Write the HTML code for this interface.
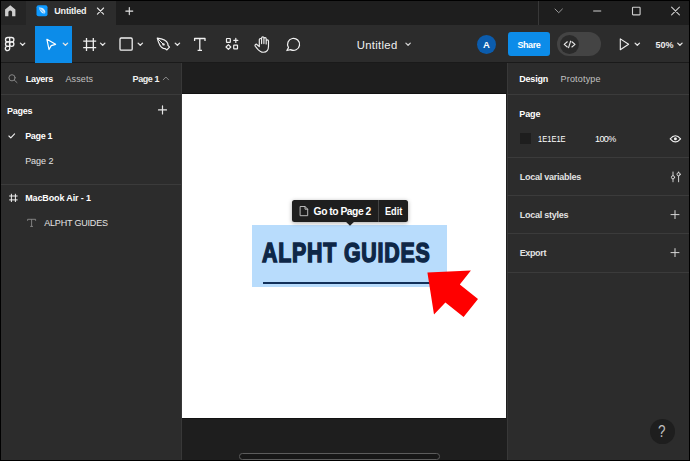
<!DOCTYPE html>
<html><head><meta charset="utf-8">
<style>
*{box-sizing:border-box;margin:0;padding:0}
html,body{width:690px;height:461px;overflow:hidden;background:#000;font-family:"Liberation Sans",sans-serif;color:#fff}
.a{position:absolute}
.t{position:absolute;white-space:nowrap;font-size:9px;line-height:13px;color:#fff}
.b{font-weight:bold}
.hr{position:absolute;height:1px;background:#3b3b3b}
svg{position:absolute;left:0;top:0;overflow:visible}
</style></head><body>
<!-- backgrounds -->
<div class="a" style="left:1px;top:1px;width:687.7px;height:24px;background:#1e1e1e"></div>
<div class="a" style="left:1px;top:1px;width:25px;height:24px;background:#252525"></div>
<div class="a" style="left:26px;top:1px;width:90px;height:24px;background:#2c2c2c"></div>
<div class="a" style="left:538px;top:1px;width:1px;height:24px;background:#383838"></div>
<div class="a" style="left:1px;top:25px;width:687.7px;height:38px;background:#2c2c2c"></div>
<div class="a" style="left:1px;top:62px;width:687.7px;height:1px;background:#1a1a1a"></div>
<div class="a" style="left:35px;top:25.6px;width:37.3px;height:37px;background:#0c8ce9"></div>
<!-- canvas -->
<div class="a" style="left:182px;top:63px;width:325px;height:396.6px;background:#1e1e1e"></div>
<div class="a" style="left:182px;top:92.8px;width:324.2px;height:326.5px;background:#121212"></div>
<div class="a" style="left:182px;top:93.8px;width:324.2px;height:324.5px;background:#fff"></div>
<!-- left panel -->
<div class="a" style="left:1px;top:63px;width:181px;height:396.6px;background:#2c2c2c;border-right:1px solid #383838"></div>
<div class="hr" style="left:1px;top:94px;width:180px"></div>
<div class="hr" style="left:1px;top:183.5px;width:180px"></div>
<!-- right panel -->
<div class="a" style="left:506.6px;top:63px;width:182.1px;height:396.6px;background:#2c2c2c;border-left:1px solid #383838"></div>
<div class="hr" style="left:507px;top:94px;width:181.7px"></div>
<div class="hr" style="left:507px;top:157.2px;width:181.7px"></div>
<div class="hr" style="left:507px;top:195.2px;width:181.7px"></div>
<div class="hr" style="left:507px;top:233.2px;width:181.7px"></div>
<div class="hr" style="left:507px;top:271.6px;width:181.7px"></div>
<div class="a" style="left:520px;top:133px;width:11px;height:11px;background:#1e1e1e"></div>

<!-- toolbar widgets -->
<div class="a" style="left:477.4px;top:35.1px;width:19px;height:19px;border-radius:50%;background:#0b5cad"></div>
<div class="a" style="left:507.7px;top:32px;width:42.4px;height:24.4px;border-radius:3px;background:#0c8ce9"></div>
<div class="a" style="left:557px;top:32px;width:43.6px;height:24.4px;border-radius:12.2px;background:#444"></div>
<div class="a" style="left:559.8px;top:34.9px;width:19px;height:19px;border-radius:50%;background:#2a2a2a"></div>

<!-- canvas content -->
<div class="a" style="left:252.3px;top:225.4px;width:195.2px;height:61.5px;background:#b8dcfc"></div>
<div class="a" style="left:262.6px;top:282px;width:168px;height:2px;background:#12305a"></div>
<div class="t b" id="big" style="left:262.4px;top:233.4px;font-size:26.8px;line-height:40px;color:#0e2747;transform-origin:0 50%;transform:scaleX(0.797);-webkit-text-stroke:1.5px #0e2747;letter-spacing:1px">ALPHT GUIDES</div>
<!-- tooltip -->
<div class="a" style="left:291.6px;top:200.2px;width:116.8px;height:21.4px;border-radius:2.5px;background:#1e1e1e;box-shadow:0 1px 4px rgba(0,0,0,.35)"></div>
<div class="a" style="left:377.6px;top:200.2px;width:1px;height:21.4px;background:#444"></div>
<!-- scrollbar -->
<div class="a" style="left:239px;top:453.3px;width:201px;height:6.6px;border-radius:3.3px;background:#171717;border:1px solid #5c5c5c"></div>
<!-- help -->
<div class="a" style="left:650.2px;top:419px;width:24.6px;height:24.6px;border-radius:50%;background:#1e1e1e"></div>
<div class="t" style="left:658.4px;top:421.6px;font-size:16px;line-height:20px;color:#c0c0c0;transform-origin:0 50%;transform:scaleX(0.84)">?</div>

<div class="t b" style="left:54.30px;top:4.68px;font-size:9px;line-height:13px;letter-spacing:-0.186px;color:#f2f2f2;">Untitled</div>
<div class="t" style="left:356.80px;top:36.58px;font-size:11.3px;line-height:16px;letter-spacing:0.298px;color:#f0f0f0;">Untitled</div>
<div class="t b" style="left:483.00px;top:38.01px;font-size:9.5px;line-height:13px;letter-spacing:0.000px;color:#fff;">A</div>
<div class="t b" style="left:517.40px;top:38.88px;font-size:9px;line-height:13px;letter-spacing:-0.404px;color:#fff;">Share</div>
<div class="t b" style="left:655.60px;top:38.88px;font-size:9px;line-height:13px;letter-spacing:-0.058px;color:#eee;">50%</div>
<div class="t b" style="left:25.80px;top:72.98px;font-size:9px;line-height:13px;letter-spacing:-0.326px;color:#ffffff;">Layers</div>
<div class="t" style="left:65.50px;top:72.98px;font-size:9px;line-height:13px;letter-spacing:0.097px;color:#c2c2c2;">Assets</div>
<div class="t b" style="left:132.60px;top:72.98px;font-size:9px;line-height:13px;letter-spacing:-0.446px;color:#f0f0f0;">Page 1</div>
<div class="t b" style="left:7.00px;top:104.88px;font-size:9px;line-height:13px;letter-spacing:-0.233px;color:#ffffff;">Pages</div>
<div class="t b" style="left:25.20px;top:129.78px;font-size:9px;line-height:13px;letter-spacing:-0.326px;color:#ffffff;">Page 1</div>
<div class="t" style="left:25.20px;top:154.78px;font-size:9px;line-height:13px;letter-spacing:-0.066px;color:#e3e3e3;">Page 2</div>
<div class="t b" style="left:25.20px;top:191.88px;font-size:9px;line-height:13px;letter-spacing:-0.128px;color:#ffffff;">MacBook Air - 1</div>
<div class="t" style="left:44.20px;top:216.58px;font-size:9px;line-height:13px;letter-spacing:-0.187px;color:#e3e3e3;">ALPHT GUIDES</div>
<div class="t b" style="left:519.30px;top:72.98px;font-size:9px;line-height:13px;letter-spacing:-0.223px;color:#ffffff;">Design</div>
<div class="t" style="left:560.60px;top:72.98px;font-size:9px;line-height:13px;letter-spacing:0.171px;color:#c2c2c2;">Prototype</div>
<div class="t b" style="left:519.30px;top:108.18px;font-size:9px;line-height:13px;letter-spacing:-0.105px;color:#ffffff;">Page</div>
<div class="t" style="left:538.00px;top:132.98px;font-size:9px;line-height:13px;letter-spacing:0.000px;color:#ffffff;transform-origin:0 50%;transform:scaleX(0.836);">1E1E1E</div>
<div class="t" style="left:595.00px;top:132.98px;font-size:9px;line-height:13px;letter-spacing:-0.577px;color:#ffffff;">100%</div>
<div class="t b" style="left:519.70px;top:170.68px;font-size:9px;line-height:13px;letter-spacing:-0.246px;color:#e3e3e3;">Local variables</div>
<div class="t b" style="left:519.70px;top:208.98px;font-size:9px;line-height:13px;letter-spacing:-0.239px;color:#e3e3e3;">Local styles</div>
<div class="t b" style="left:519.70px;top:246.78px;font-size:9px;line-height:13px;letter-spacing:-0.363px;color:#e3e3e3;">Export</div>
<div class="t b" style="left:313.60px;top:204.63px;font-size:10.3px;line-height:14px;letter-spacing:-0.478px;color:#fff;">Go to Page 2</div>
<div class="t b" style="left:384.50px;top:204.63px;font-size:10.3px;line-height:14px;letter-spacing:0.000px;color:#fff;transform-origin:0 50%;transform:scaleX(0.889);">Edit</div>

<svg width="690" height="461" viewBox="0 0 690 461" fill="none" stroke-linecap="round" stroke-linejoin="round">
<!-- home -->
<path d="M10.25 5.2 L15.4 9.6 V16.2 H12.1 V12.2 Q12.1 10.6 10.25 10.6 Q8.4 10.6 8.4 12.2 V16.2 H5.1 V9.6 Z" fill="#cfcfcf" stroke="none"/>
<!-- file tab icon -->
<rect x="36.5" y="5.2" width="11" height="11" rx="2" fill="#0d99ff" stroke="none"/>
<path d="M38.8 7.6 Q43.5 7.2 45.2 11 Q45.6 13 44.6 13.6 Q40.5 13.8 38.8 7.6 Z" fill="#d4ebff" stroke="none"/>
<path d="M40 8.6 L44 12.6" stroke="#0d99ff" stroke-width="0.7"/>
<!-- tab close, plus -->
<path d="M97.4 8 L103.6 14.2 M103.6 8 L97.4 14.2" stroke="#e6e6e6" stroke-width="1.1"/>
<path d="M129.3 7.6 V14.6 M125.8 11.1 H132.8" stroke="#e6e6e6" stroke-width="1.1"/>
<!-- window controls -->
<path d="M555 9 L558.7 12.7 L562.4 9" stroke="#9a9a9a" stroke-width="1"/>
<path d="M593.2 11 H601.2" stroke="#d0d0d0" stroke-width="1" stroke-linecap="butt"/>
<rect x="632.5" y="7.3" width="7.6" height="7.6" rx="0.6" stroke="#d0d0d0" stroke-width="1.1"/>
<path d="M671.6 7.1 L679.4 14.9 M679.4 7.1 L671.6 14.9" stroke="#d0d0d0" stroke-width="1.1"/>

<!-- figma logo -->
<g stroke="#f0f0f0" stroke-width="1.3">
<path d="M9.7 37.5 H7.7 a2.2 2.2 0 0 0 0 4.4 H9.7 Z"/>
<path d="M9.7 37.5 H11.7 a2.2 2.2 0 0 1 0 4.4 H9.7"/>
<path d="M9.7 41.9 H7.7 a2.2 2.2 0 0 0 0 4.4 H9.7 Z"/>
<circle cx="11.7" cy="44.1" r="2.2"/>
<path d="M9.7 46.3 H7.7 a2.2 2.2 0 1 0 2 2.2 Z"/>
</g>
<!-- chevrons down -->
<g stroke="#e4e4e4" stroke-width="1.3">
<path d="M20.4 43.1 L22.6 45.3 L24.8 43.1"/>
<path d="M63.2 43.1 L65.4 45.3 L67.6 43.1"/>
<path d="M100.5 43.1 L102.7 45.3 L104.9 43.1"/>
<path d="M138.1 43.1 L140.3 45.3 L142.5 43.1"/>
<path d="M175.2 43.1 L177.4 45.3 L179.6 43.1"/>
<path d="M405.9 43.1 L408.1 45.3 L410.3 43.1" stroke="#cfcfcf"/>
<path d="M635.1 43.1 L637.3 45.3 L639.5 43.1"/>
<path d="M677.7 43.1 L679.9 45.3 L682.1 43.1"/>
</g>
<!-- move tool -->
<path d="M46.9 39.3 L55.6 44.3 L51.2 45.6 L49 49.5 Z" stroke="#fff" stroke-width="1.2"/>
<!-- frame tool -->
<path d="M86.5 38 V51 M93.3 38 V51 M83.2 41.1 H96.2 M83.2 47.6 H96.2" stroke="#f0f0f0" stroke-width="1.3" stroke-linecap="butt"/>
<!-- rect tool -->
<rect x="120" y="38" width="12.2" height="12.2" rx="1.2" stroke="#f0f0f0" stroke-width="1.3"/>
<!-- pen tool -->
<path d="M157.3 38.2 C161 38.6 166.5 39.8 167.8 43.6 L168 45.4 L169.5 47.2 L166.9 49.9 L165 48.6 L163.4 48.4 C159.6 47.2 158.2 42 157.3 38.2 Z" stroke="#f0f0f0" stroke-width="1.2"/>
<path d="M157.8 38.7 L162.8 43.8" stroke="#f0f0f0" stroke-width="1"/>
<circle cx="163.5" cy="44.4" r="1.2" fill="#f0f0f0" stroke="none"/>
<!-- text tool -->
<path d="M194.6 41 V38.5 H205 V41 M199.8 38.5 V50.4 M197.6 50.4 H202" stroke="#f0f0f0" stroke-width="1.3" stroke-linecap="butt"/>
<!-- resources -->
<g stroke="#f0f0f0" stroke-width="1.2">
<rect x="226.5" y="38.5" width="3.8" height="3.8" rx="0.4"/>
<path d="M235.8 38.4 V42.4 M233.8 40.4 H237.8"/>
<path d="M228.4 44.6 L230.8 47 L228.4 49.4 L226 47 Z"/>
<rect x="233.7" y="45.1" width="3.8" height="3.8" rx="0.4"/>
</g>
<!-- hand -->
<g stroke="#f0f0f0" stroke-width="1.15" transform="translate(254,36)">
<path d="M5.3 10.6 V3.6 a1.15 1.15 0 0 1 2.3 0 V7.6 M7.6 7.6 V2 a1.15 1.15 0 0 1 2.3 0 V7.6 M9.9 7.6 V2.7 a1.15 1.15 0 0 1 2.3 0 V8 M12.2 8 V5 a1.15 1.15 0 0 1 2.3 0 V10.2 C14.5 13.6 12.6 16.2 9.3 16.2 C5.2 16.2 4 13.2 1.3 10.3 a1.2 1.2 0 0 1 1.8 -1.6 L5.3 10.6"/>
</g>
<!-- comment -->
<path d="M286.9 50.5 L288.5 47.6 A6 6 0 1 1 290.6 49.6 Z" stroke="#f0f0f0" stroke-width="1.25"/>
<!-- dev mode icon -->
<path d="M567.3 41.8 L564.2 44.4 L567.3 47 M571.9 41.8 L575 44.4 L571.9 47 M570.6 41.2 L568.6 47.6" stroke="#e6e6e6" stroke-width="1.15"/>
<!-- play -->
<path d="M620.3 38.9 L628.6 44.3 L620.3 49.7 Z" stroke="#f0f0f0" stroke-width="1.1"/>
<!-- search -->
<circle cx="12" cy="77.8" r="3.1" stroke="#8f8f8f" stroke-width="0.9"/>
<path d="M14.3 80.1 L17 82.6" stroke="#8f8f8f" stroke-width="0.9"/>
<!-- page chevron up -->
<path d="M163.2 79.8 L165.9 77 L168.6 79.8" stroke="#8a8a8a" stroke-width="1"/>
<!-- pages plus -->
<path d="M162.5 105.9 V113.9 M158.5 109.9 H166.5" stroke="#e6e6e6" stroke-width="1.2"/>
<!-- check -->
<path d="M8.9 136 L10.8 137.9 L14.6 133.8" stroke="#f0f0f0" stroke-width="1.1"/>
<!-- frame layer icon -->
<path d="M11.4 193.8 V202 M15.4 193.8 V202 M9.2 196 H17.6 M9.2 199.9 H17.6" stroke="#f0f0f0" stroke-width="1" stroke-linecap="butt"/>
<!-- text layer icon -->
<path d="M27.6 220.8 V219.3 H35.6 V220.8 M31.6 219.3 V226.4 M30.2 226.4 H33" stroke="#8a8a8a" stroke-width="0.9" stroke-linecap="butt"/>
<!-- eye -->
<path d="M670.2 138.8 Q675.4 132.6 680.6 138.8 Q675.4 145 670.2 138.8 Z" stroke="#f0f0f0" stroke-width="1.1"/>
<circle cx="675.4" cy="138.8" r="1.5" fill="#f0f0f0" stroke="none"/>
<!-- variables icon -->
<g stroke="#e0e0e0" stroke-width="0.9">
<path d="M673 172 V175.6 M673 179 V181.8 M678.6 172 V172.6 M678.6 176 V181.8"/>
<circle cx="673" cy="177.3" r="1.6"/>
<circle cx="678.6" cy="174.3" r="1.6"/>
</g>
<!-- plus icons right -->
<path d="M675 210.6 V218.6 M671 214.6 H679 M675 248.6 V256.6 M671 252.6 H679" stroke="#d8d8d8" stroke-width="1"/>
<!-- tooltip arrow + file icon -->
<path d="M345.6 221.4 H354.4 L350 225.8 Z" fill="#1e1e1e" stroke="none"/>
<path d="M300.5 206.5 H305 L307.7 209.2 V215.7 H300.5 Z M305 206.5 V209.2 H307.7" stroke="#c8c8c8" stroke-width="0.9"/>
<!-- red arrow -->
<path d="M427.4 272.5 L470.9 270.6 L459.8 284.6 L478 299 L463.6 316.9 L445.4 302.4 L434 314.5 Z" fill="#ff0000" stroke="none"/>
</svg>
</body></html>
